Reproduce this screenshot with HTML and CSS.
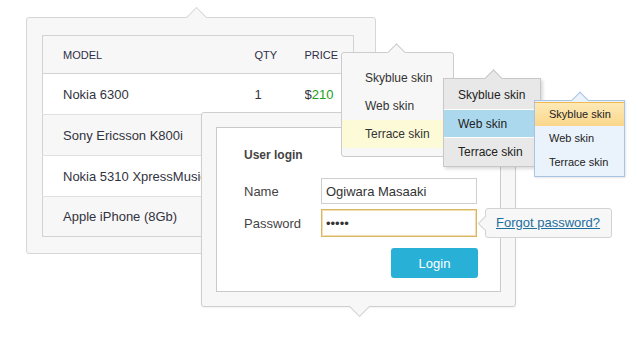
FILE: index.html
```html
<!DOCTYPE html>
<html lang="en">
<head>
    <meta charset="UTF-8">
    <title>Skins</title>
    <link rel="stylesheet" href="styles.css">
</head>
<body>

    <div class="card">
        <table class="grid">
            <thead>
                <tr><th class="c-model">Model</th><th class="c-qty">Qty</th><th class="c-price">Price</th></tr>
            </thead>
            <tbody>
                <tr><td>Nokia 6300</td><td>1</td><td>$<span class="num">210</span></td></tr>
                <tr class="alt"><td>Sony Ericsson K800i</td><td></td><td></td></tr>
                <tr><td>Nokia 5310 XpressMusic</td><td></td><td></td></tr>
                <tr class="alt"><td>Apple iPhone (8Gb)</td><td></td><td></td></tr>
            </tbody>
        </table>
    </div>

    <div class="login">
        <div class="login-box">
            <h4>User login</h4>
            <div class="field">
                <label>Name</label>
                <input type="text" class="inp" value="Ogiwara Masaaki">
            </div>
            <div class="field">
                <label>Password</label>
                <input type="password" class="inp focus" value="12345">
            </div>
            <div class="actions">
                <button class="btn">Login</button>
            </div>
        </div>
    </div>

    <div class="tip"><a href="#">Forgot password?</a></div>

    <ul class="menu menu-light">
        <li>Skyblue skin</li>
        <li>Web skin</li>
        <li class="on">Terrace skin</li>
    </ul>

    <ul class="menu menu-gray">
        <li>Skyblue skin</li>
        <li class="on">Web skin</li>
        <li>Terrace skin</li>
    </ul>

    <ul class="menu menu-blue">
        <li class="on">Skyblue skin</li>
        <li>Web skin</li>
        <li>Terrace skin</li>
    </ul>

</body>
</html>
```

FILE: styles.css
```css
* { margin: 0; padding: 0; box-sizing: border-box; }
body { position: relative; width: 638px; height: 351px; overflow: hidden; background: #fff; font-family: "Liberation Sans", Arial, sans-serif; color: #333340; }

/* table card */
.card { position: relative; margin: 17px 0 0 26px; width: 350px; height: 237px; padding: 17px 21px 0 15px; background: #f7f7f7; border: 1px solid #d6d6d6; border-radius: 3px; }
.card::before { content: ""; position: absolute; top: -8px; left: 162px; width: 14px; height: 14px; background: #f7f7f7; border-top: 1px solid #d6d6d6; border-left: 1px solid #d6d6d6; transform: rotate(45deg); }
.grid { width: 312px; border-collapse: collapse; border: 1px solid #d3d3d3; font-size: 13px; table-layout: fixed; }
.grid th { height: 38px; text-align: left; font-weight: normal; font-size: 11px; text-transform: uppercase; background: #f7f7f7; color: #2e2e48; border-bottom: 1px solid #d3d3d3; }
.grid td { height: 41px; background: #fff; border-bottom: 1px solid #e0e0e0; white-space: nowrap; overflow: hidden; }
.grid tr.alt td { background: #f7f7f7; }
.grid tbody tr:last-child td { border-bottom: none; height: 40px; }
.grid th:first-child, .grid td:first-child { padding-left: 20px; }
.c-model { width: 212px; }
.c-qty { width: 50px; }
.num { color: #20a020; }

/* login panel */
.login { position: absolute; left: 201px; top: 112px; width: 315px; height: 195px; padding: 14px; background: #f7f7f7; border: 1px solid #cfcfcf; border-radius: 3px; box-shadow: 0 1px 2px rgba(0,0,0,0.05); }
.login::after { content: ""; position: absolute; bottom: -8px; left: 150px; width: 14px; height: 14px; background: #f7f7f7; border-right: 1px solid #cfcfcf; border-bottom: 1px solid #cfcfcf; transform: rotate(45deg); }
.login-box { height: 165px; padding: 20px 22px 0 27px; background: #fff; border: 1px solid #cacaca; }
.login-box h4 { font-size: 12px; color: #444; margin-bottom: 16px; }
.field { display: flex; align-items: center; margin-bottom: 5px; }
.field label { width: 77px; font-size: 13px; color: #444; }
.inp { width: 156px; height: 26px; padding: 0 4px; border: 1px solid #cfcfcf; font-family: "Liberation Sans", Arial, sans-serif; font-size: 13px; color: #333; outline: none; }
.inp.focus { height: 28px; border: 1px solid #d9b566; box-shadow: inset 0 0 0 1px #f1dfb0; }
.actions { display: flex; justify-content: flex-end; margin-top: 11px; }
.btn { width: 87px; height: 30px; background: #28b0d6; color: #fff; border: none; border-radius: 3px; font-family: "Liberation Sans", Arial, sans-serif; font-size: 13px; }

/* forgot password tooltip */
.tip { position: absolute; left: 485px; top: 208px; width: 127px; height: 30px; padding: 6px 0 0 10px; background: #f7f7f7; border: 1px solid #d3d3d3; border-radius: 3px; font-size: 13px; }
.tip::before { content: ""; position: absolute; left: -6px; top: 9px; width: 10px; height: 10px; background: #f7f7f7; border-left: 1px solid #d3d3d3; border-bottom: 1px solid #d3d3d3; transform: rotate(45deg); }
.tip a { position: relative; color: #1c6e9c; }

/* skin menus */
.menu { position: absolute; list-style: none; }
.menu::before { content: ""; position: absolute; width: 12px; height: 12px; transform: rotate(45deg); }
.menu li { position: relative; white-space: nowrap; }

.menu-light { left: 341px; top: 52px; width: 113px; height: 105px; padding: 11px 0 9px; background: #f7f7f7; border: 1px solid #cccccc; border-radius: 3px; font-size: 12px; color: #333; }
.menu-light::before { top: -7px; left: 48px; background: #f7f7f7; border-top: 1px solid #cccccc; border-left: 1px solid #cccccc; }
.menu-light li { height: 28px; line-height: 28px; padding-left: 23px; }
.menu-light li.on { background: #fcfad7; }

.menu-gray { left: 443px; top: 78px; width: 98px; height: 89px; background: #e8e8e8; border: 1px solid #c8c8c8; box-shadow: 2px 2px 3px rgba(0,0,0,0.15); font-size: 12px; color: #222; }
.menu-gray::before { top: -7px; left: 43px; background: #e8e8e8; border-top: 1px solid #c8c8c8; border-left: 1px solid #c8c8c8; }
.menu-gray li { height: 28px; line-height: 28px; padding-left: 14px; border-top: 1px solid #fff; }
.menu-gray li:first-child { border-top: none; height: 30px; line-height: 32px; }
.menu-gray li.on { background: #acd8ee; }

.menu-blue { left: 534px; top: 100px; width: 91px; height: 77px; padding-top: 1px; background: #eaf2fb; border: 1px solid #a9c4e2; box-shadow: 1px 1px 2px rgba(0,0,0,0.1); font-size: 11px; color: #222; }
.menu-blue::before { top: -7px; left: 39px; width: 11px; height: 11px; background: #eaf2fb; border-top: 1px solid #a9c4e2; border-left: 1px solid #a9c4e2; }
.menu-blue li { height: 24px; line-height: 24px; padding-left: 14px; }
.menu-blue li.on { background: linear-gradient(#fdeab8, #fbd68a); border-top: 1px solid #f3b850; line-height: 22px; }
```
